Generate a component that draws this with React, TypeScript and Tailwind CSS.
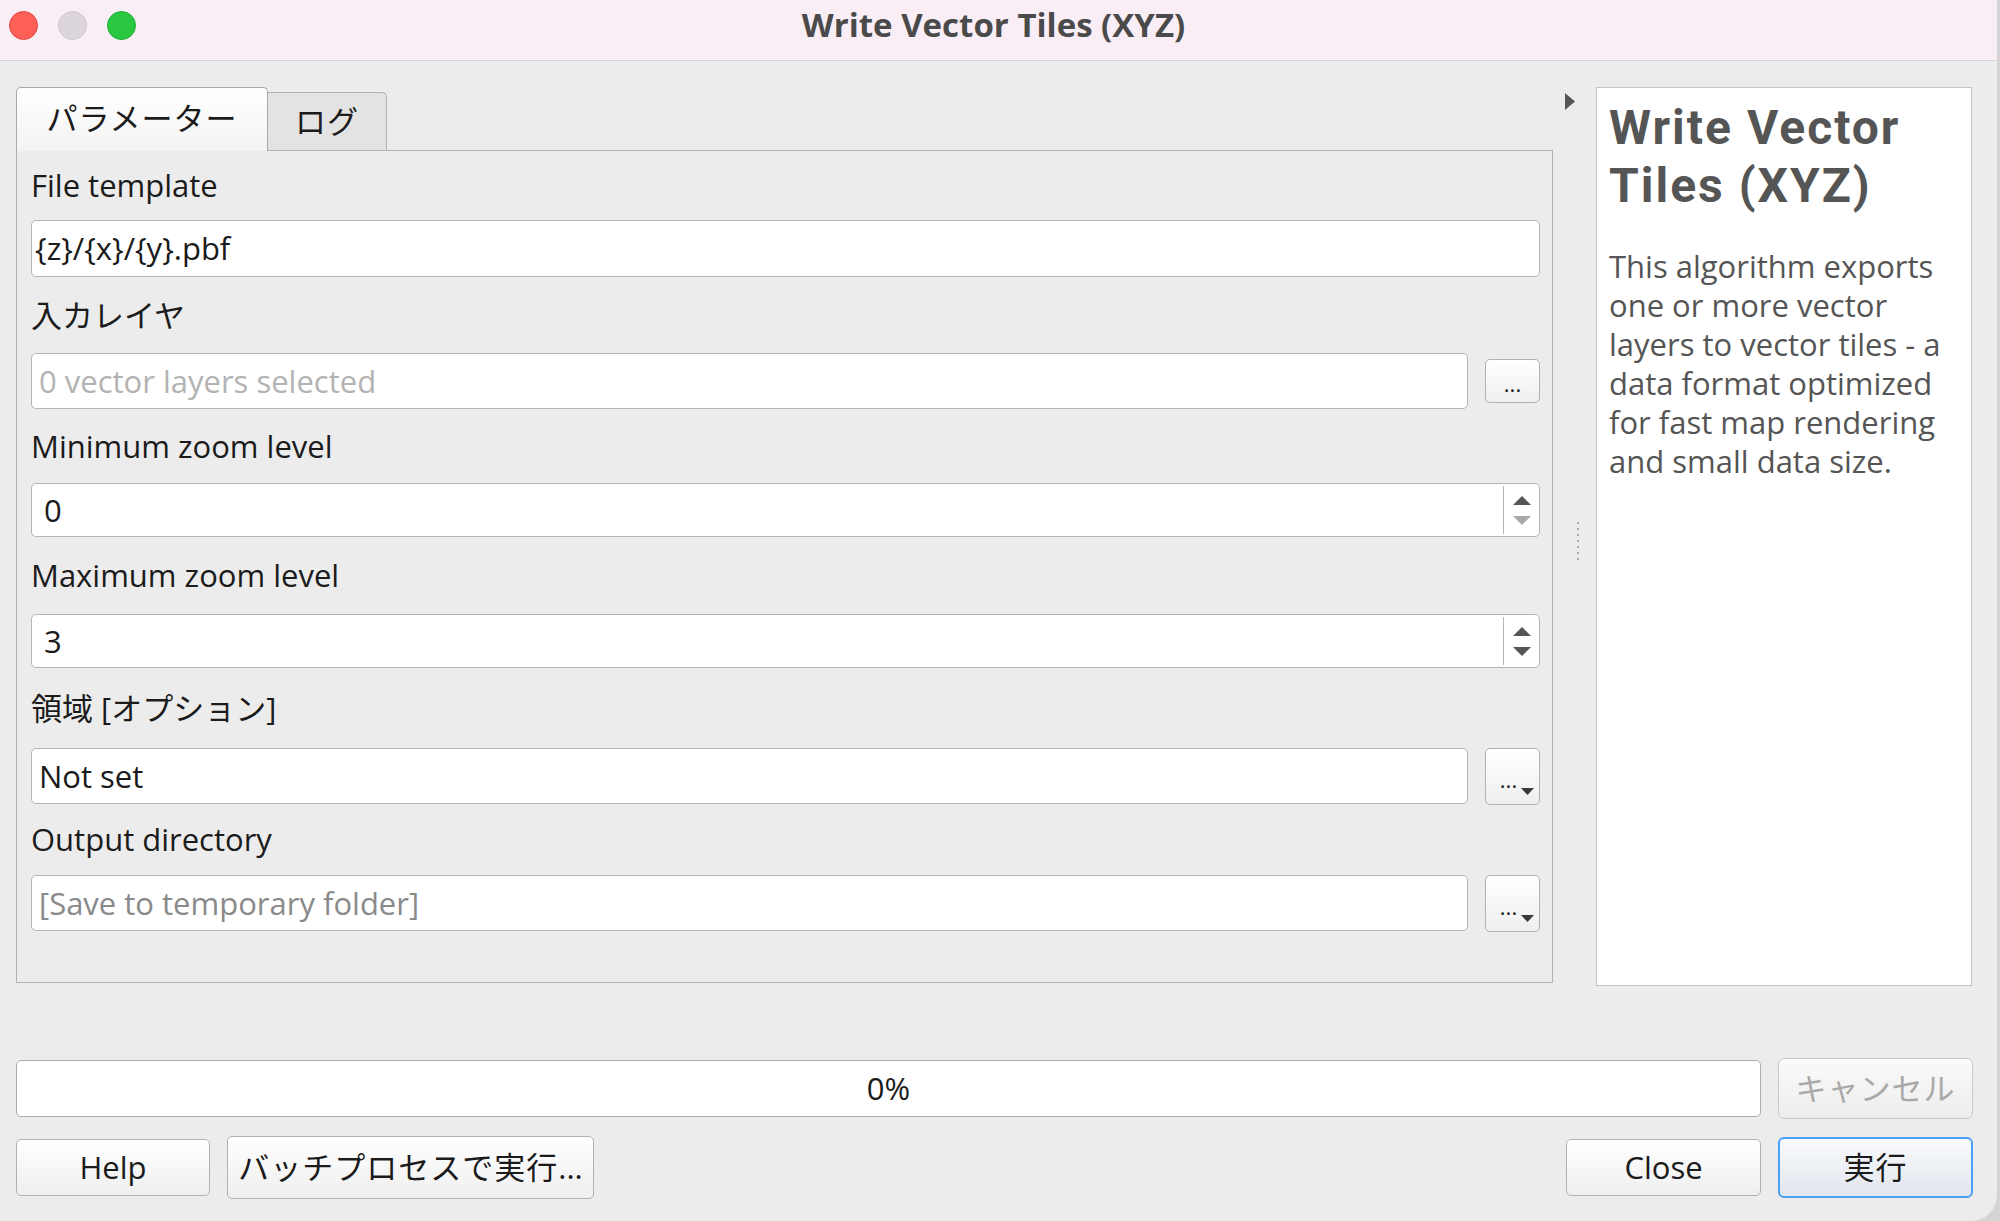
import React from "react";

const FONT = "font-['Open_Sans','Noto_Sans_CJK_JP',sans-serif]";
const BTN =
  "border border-[#b1b1b1] rounded-[5px] bg-linear-to-b from-white to-[#efefef] flex items-center justify-center text-[31px] text-[#1b1b1b]";

function J({ children }: { children: React.ReactNode }) {
  return <span className="tracking-[1px]">{children}</span>;
}

function Up({ color }: { color: string }) {
  return (
    <svg width="18" height="9" viewBox="0 0 18 9">
      <polygon points="9,0 18,9 0,9" fill={color} />
    </svg>
  );
}
function Down({ color }: { color: string }) {
  return (
    <svg width="18" height="9" viewBox="0 0 18 9">
      <polygon points="0,0 18,0 9,9" fill={color} />
    </svg>
  );
}

function DotsButton({ dropdown }: { dropdown?: boolean }) {
  return (
    <div className={`relative w-[55px] ${dropdown ? "h-[57px]" : "h-[44px]"} ${BTN}`}>
      <span className={`text-[22px] leading-none ${dropdown ? "pr-[8px] pt-[6px]" : "pt-[4px]"}`}>...</span>
      {dropdown && (
        <svg className="absolute right-[5px] bottom-[9px]" width="13" height="7" viewBox="0 0 13 7">
          <polygon points="0,0 13,0 6.5,7" fill="#3a3a3a" />
        </svg>
      )}
    </div>
  );
}

function Field({
  children,
  className,
}: {
  children: React.ReactNode;
  className: string;
}) {
  return (
    <div
      className={`border border-[#b5b5b5] rounded-[5px] bg-white flex items-center text-[31px] whitespace-nowrap overflow-hidden ${className}`}
    >
      {children}
    </div>
  );
}

function Spin({ value, downColor }: { value: string; downColor: string }) {
  return (
    <div className="h-[54px] flex border border-[#b5b5b5] rounded-[5px] bg-white">
      <div className="flex-1 flex items-center pl-[12px] text-[31px] text-[#1b1b1b]">{value}</div>
      <div className="w-[36px] border-l border-[#b5b5b5] my-[2px] flex flex-col items-center justify-center gap-[11px]">
        <Up color="#555555" />
        <Down color={downColor} />
      </div>
    </div>
  );
}

export default function App() {
  return (
    <div className={`w-[2000px] h-[1221px] bg-[#d4d4d4] ${FONT}`}>
      <div className="w-[1997px] h-[1221px] bg-[#ececec] rounded-br-[26px] overflow-hidden flex flex-col">
        {/* Title bar */}
        <div className="h-[61px] shrink-0 bg-[#f9eef6] border-b border-[#d5d1d5] grid grid-cols-[1fr_auto_1fr] items-start">
          <div className="flex gap-[20px] pl-[9px] pt-[11px]">
            <div className="w-[29px] h-[29px] rounded-full bg-[#fe5f57] border border-[#e2463f]" />
            <div className="w-[29px] h-[29px] rounded-full bg-[#dcd6dc] border border-[#cdc6cd]" />
            <div className="w-[29px] h-[29px] rounded-full bg-[#29c840] border border-[#1fae33]" />
          </div>
          <div className="pt-[3px] pr-[10px] text-[33px] leading-[44px] font-bold text-[#4a4a4a] whitespace-nowrap">
            Write Vector Tiles (XYZ)
          </div>
          <div />
        </div>

        {/* Main row */}
        <div className="flex pl-[16px] pt-[26px]">
          <div className="w-[1537px] flex flex-col">
            <div className="h-[63px] flex items-end">
              <div className="relative z-10 -mb-px w-[252px] h-[64px] border border-b-0 border-[#a8a8a8] rounded-t-[5px] bg-linear-to-b from-white to-[#f3f3f3] flex items-center justify-center text-[31px] text-[#1b1b1b] pb-[2px]">
                <J>パラメーター</J>
              </div>
              <div className="w-[119px] h-[58px] border border-b-0 border-l-0 border-[#b0b0b0] rounded-tr-[5px] bg-[#e3e3e3] flex items-center justify-center text-[31px] text-[#1b1b1b]">
                <J>ログ</J>
              </div>
            </div>
            <div className="h-[833px] border border-[#b3b3b3] bg-[#ececec] pl-[14px] pr-[12px] flex flex-col text-[#1b1b1b]">
              <div className="h-[69px] flex items-center text-[31px]">File template</div>
              <Field className="h-[57px] pl-[3px] text-[#1b1b1b]">{"{z}/{x}/{y}.pbf"}</Field>

              <div className="h-[76px] flex items-center text-[31px]">入カレイヤ</div>
              <div className="h-[56px] flex items-center gap-[17px]">
                <Field className="flex-1 h-[56px] pl-[7px] text-[#b3b3b3]">0 vector layers selected</Field>
                <DotsButton />
              </div>

              <div className="h-[74px] flex items-center text-[31px]">Minimum zoom level</div>
              <Spin value="0" downColor="#a9a9a9" />

              <div className="h-[77px] flex items-center text-[31px]">Maximum zoom level</div>
              <Spin value="3" downColor="#555555" />

              <div className="h-[80px] flex items-center text-[31px] whitespace-nowrap">
                領域&nbsp;[オプション]
              </div>
              <div className="h-[56px] flex items-center gap-[17px]">
                <Field className="flex-1 h-[56px] pl-[7px] text-[#1b1b1b]">Not set</Field>
                <DotsButton dropdown />
              </div>

              <div className="h-[71px] flex items-center text-[31px]">Output directory</div>
              <div className="h-[56px] flex items-center gap-[17px]">
                <Field className="flex-1 h-[56px] pl-[7px] text-[#8a8a8a]">[Save to temporary folder]</Field>
                <DotsButton dropdown />
              </div>
            </div>
          </div>

          {/* Splitter */}
          <div className="w-[43px] flex flex-col">
            <svg className="ml-[12px] mt-[6px]" width="10" height="17" viewBox="0 0 10 17">
              <polygon points="0,0 10,8.5 0,17" fill="#555555" />
            </svg>
            <div className="ml-[24px] mt-[412px] flex flex-col gap-[4px]">
              {[0, 1, 2, 3, 4, 5, 6].map((i) => (
                <div key={i} className="w-[2px] h-[2px] bg-[#a8a8a8]" />
              ))}
            </div>
          </div>

          {/* Help panel */}
          <div className="w-[376px] h-[899px] border border-[#c4c4c4] bg-white pl-[12px] pt-[11px] text-[#555555]">
            <div className="font-['Roboto',sans-serif] font-bold text-[48px] leading-[58px] tracking-[2px] whitespace-nowrap">
              Write Vector
              <br />
              Tiles (XYZ)
            </div>
            <div className="mt-[32px] text-[31px] leading-[39px] whitespace-nowrap">
              This algorithm exports
              <br />
              one or more vector
              <br />
              layers to vector tiles - a
              <br />
              data format optimized
              <br />
              for fast map rendering
              <br />
              and small data size.
            </div>
          </div>
        </div>

        {/* Progress row */}
        <div className="mt-[72px] h-[61px] pl-[16px] pr-[24px] flex items-center gap-[17px]">
          <div className="flex-1 h-[57px] border border-[#acacac] rounded-[5px] bg-white flex items-center justify-center text-[31px] text-[#1b1b1b]">
            0%
          </div>
          <div className="w-[195px] h-[61px] border border-[#c9c9c9] rounded-[6px] bg-linear-to-b from-[#fafafa] to-[#ededed] flex items-center justify-center text-[31px] text-[#a9a9a9]">
            <J>キャンセル</J>
          </div>
        </div>

        {/* Buttons row */}
        <div className="mt-[17px] h-[63px] pl-[16px] pr-[24px] flex items-center">
          <div className={`w-[194px] h-[57px] ${BTN}`}>Help</div>
          <div className={`ml-[17px] w-[367px] h-[63px] ${BTN} whitespace-nowrap`}>
            <J>バッチプロセスで実行</J>...
          </div>
          <div className="flex-1" />
          <div className={`w-[195px] h-[57px] ${BTN}`}>Close</div>
          <div className="ml-[17px] w-[195px] h-[61px] border-2 border-[#4a9ff6] rounded-[6px] bg-linear-to-b from-[#f9fafc] to-[#e1e6ed] flex items-center justify-center text-[31px] text-[#1b1b1b]">
            <J>実行</J>
          </div>
        </div>
      </div>
    </div>
  );
}
